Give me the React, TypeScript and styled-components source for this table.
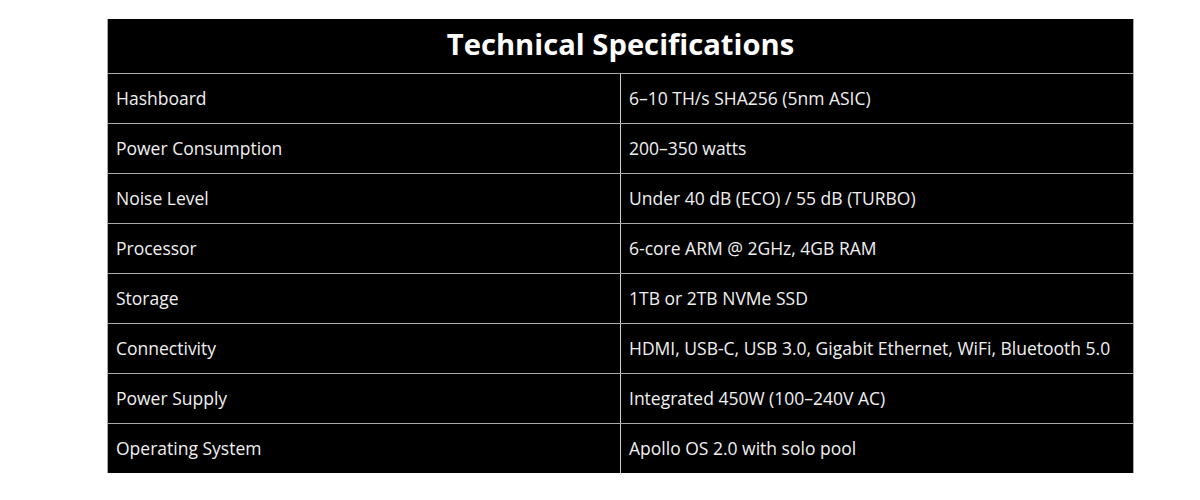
import { createGlobalStyle } from "styled-components"
import styled from "styled-components"

const GlobalStyle = createGlobalStyle`
    body {
        margin:0;
        background:#fff;
        font-family:"Open Sans", "Noto Sans", sans-serif;
    }
`
const Page = styled.div`
    padding:19px 0 0 107px;
`
const Table = styled.div`
    width:1027px;
    background:#000;
    border-left:1px solid #a9a9a9;
    border-right:1px solid #a9a9a9;
    box-sizing:border-box;
`
const Title = styled.div`
    height:54px;
    padding-bottom:4px;
    box-sizing:border-box;
    display:flex;
    align-items:center;
    justify-content:center;
    color:#fff;
    font-weight:700;
    font-size:29.2px;
`
const Row = styled.div`
    display:grid;
    grid-template-columns:513px 1fr;
    height:50px;
    border-top:1px solid #a9a9a9;
    box-sizing:border-box;
`
const Cell = styled.div<{ $divider?: boolean }>`
    display:flex;
    align-items:center;
    padding:0 0 2px 8px;
    color:#f0f0f0;
    font-size:17.5px;
    border-right:${p => p.$divider ? "1px solid #d0d0d0" : "none"};
`

const specs: [string, string][] = [
    ["Hashboard", "6–10 TH/s SHA256 (5nm ASIC)"],
    ["Power Consumption", "200–350 watts"],
    ["Noise Level", "Under 40 dB (ECO) / 55 dB (TURBO)"],
    ["Processor", "6-core ARM @ 2GHz, 4GB RAM"],
    ["Storage", "1TB or 2TB NVMe SSD"],
    ["Connectivity", "HDMI, USB-C, USB 3.0, Gigabit Ethernet, WiFi, Bluetooth 5.0"],
    ["Power Supply", "Integrated 450W (100–240V AC)"],
    ["Operating System", "Apollo OS 2.0 with solo pool"],
]

const App = () => {
    return (
        <Page>
            <GlobalStyle />
            <Table>
                <Title>Technical Specifications</Title>
                {specs.map(([name, value]) => (
                    <Row key={name}>
                        <Cell $divider>{name}</Cell>
                        <Cell>{value}</Cell>
                    </Row>
                ))}
            </Table>
        </Page>
    )
}
export default App
